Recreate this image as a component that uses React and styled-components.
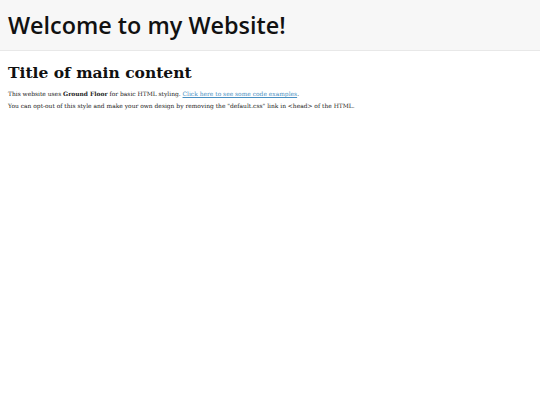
import React from "react";
import styled, { createGlobalStyle } from "styled-components";

const Global = createGlobalStyle`
  html, body { margin: 0; padding: 0; background: #ffffff; }
  body { font-family: "DejaVu Serif", Georgia, serif; color: #111; }
`;

const Header = styled.header`
  background: #f7f7f7;
  border-bottom: 1px solid #e8e8e8;
  height: 51px;
  display: flex;
  align-items: center;
  padding: 0 8px;
  box-sizing: border-box;
`;

const SiteTitle = styled.h1`
  margin: 0;
  font-family: "Open Sans", "Noto Sans", sans-serif;
  font-weight: 550;
  font-size: 23.4px;
  line-height: 28px;
  color: #111;
`;

const Main = styled.main`
  padding: 13px 8px;
`;

const Title = styled.h2`
  margin: 0 0 8px;
  font-size: 15.5px;
  font-weight: bold;
  color: #111;
  line-height: 18px;
`;

const Para = styled.p`
  margin: 0 0 4px;
  font-size: 5.95px;
  line-height: 8px;
  color: #222;
`;

const Link = styled.a`
  color: #4a90c2;
  text-decoration: underline;
`;

export default function App() {
  return (
    <>
      <Global />
      <Header>
        <SiteTitle>Welcome to my Website!</SiteTitle>
      </Header>
      <Main>
        <Title>Title of main content</Title>
        <Para>
          This website uses <b>Ground Floor</b> for basic HTML styling.{" "}
          <Link href="#">Click here to see some code examples</Link>.
        </Para>
        <Para>
          You can opt-out of this style and make your own design by removing the "default.css" link in &lt;head&gt; of the HTML.
        </Para>
      </Main>
    </>
  );
}
